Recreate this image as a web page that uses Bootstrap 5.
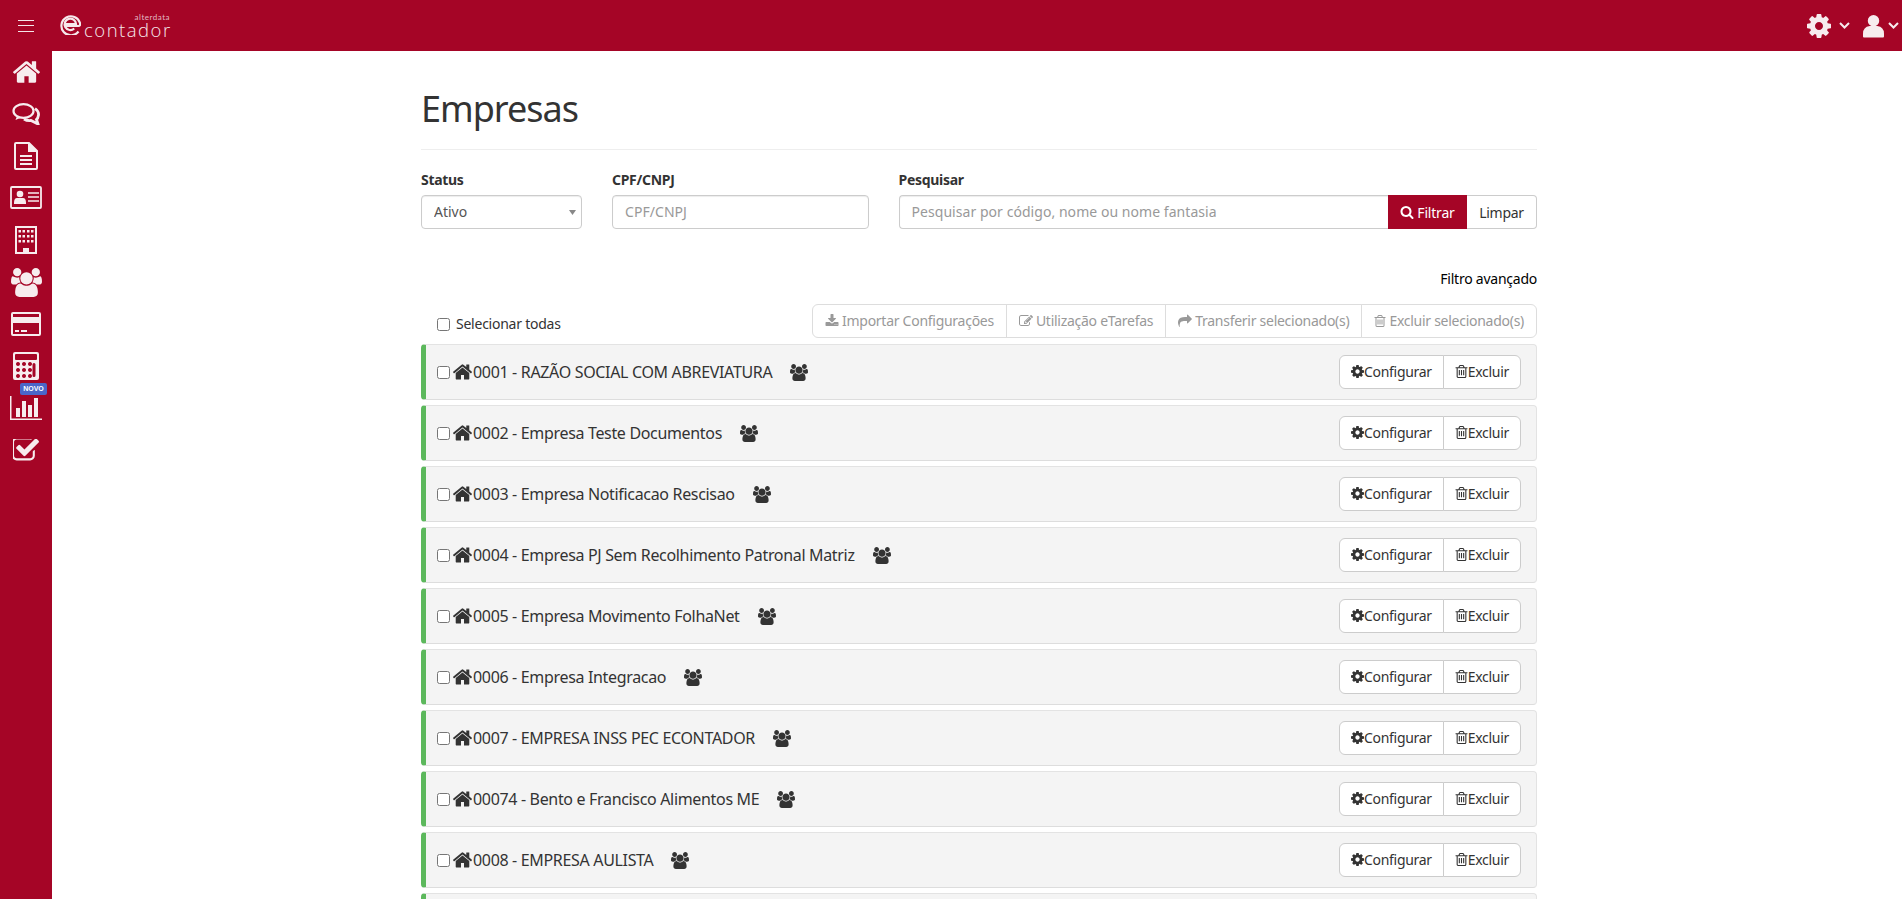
<!DOCTYPE html>
<html lang="pt-BR">
<head>
<meta charset="utf-8">
<title>Empresas</title>
<link href="https://cdn.jsdelivr.net/npm/bootstrap@5.3.0/dist/css/bootstrap.min.css" rel="stylesheet">
<style>
html,body{height:899px;overflow:hidden}
body{font-family:"Noto Sans","Open Sans",sans-serif;font-size:14px;color:#333;background:#fff}
.topo{height:51px;background:#a50526;color:#fff;padding:0 3px 0 18px}
.burger{width:16px;height:12px;border-top:1px solid #f5e6e9;border-bottom:1px solid #f5e6e9;position:relative;background:none;padding:0;border-left:0;border-right:0}
.burger::after{content:"";position:absolute;left:0;right:0;top:4.5px;height:1px;background:#f5e6e9}
.marca{margin-left:26px;width:112px;height:26px;position:relative}
.marca-e{width:21px;height:21px;position:absolute;left:0;top:1px}
.marca-nome{position:absolute;left:24px;top:8px;font:300 18.500px/18px "Open Sans",sans-serif;letter-spacing:1.500px;color:#f6e9ec}
.marca-alter{position:absolute;right:2px;top:0;font:400 8px/8px Lato,sans-serif;letter-spacing:.5px;color:#e3b9c3}
.fundo{height:848px;overflow:hidden}
.lateral{width:52px;background:#a50526;flex:none}
.lat-item{height:42px;position:relative;color:#f7ecee}
.novo-tag{position:absolute;left:20px;top:-4px;width:27px;height:12px;background:#4a66c8;color:#fff;border-radius:2px;font:700 7px/12px "Liberation Sans",sans-serif;text-align:center}
.conteudo{width:1116px;height:848px;overflow:hidden;margin-left:369px;flex:none}
.titulo{font-size:36px;font-weight:400;letter-spacing:-1px;line-height:40px;margin:38px 0 0;padding-bottom:20px;border-bottom:1px solid #eee;color:#333}
.filtros{--bs-gutter-x:30px;margin-top:20px}
.rotulo{font-weight:700;font-size:14px;letter-spacing:-.3px;line-height:20px;margin-bottom:5px;display:block;color:#333}
.campo{height:34px;font-size:14px;padding:5px 12px 7px;border:1px solid #ccc;border-radius:4px;color:#555;box-shadow:inset 0 1px 1px rgba(0,0,0,.075)}
.campo::placeholder{color:#999;letter-spacing:.05px}
.form-select.campo{background-image:url("data:image/svg+xml,%3Csvg xmlns='http://www.w3.org/2000/svg' viewBox='0 0 7 5'%3E%3Cpath d='M0 0h7L3.500 5z' fill='%23888'/%3E%3C/svg%3E");background-size:7px 5px;background-position:right 5px center;padding-right:20px}
.btn-filtrar{background:#a50526;color:#fff;border:1px solid #a50526;border-radius:0;font-size:14px;letter-spacing:-.2px;padding:0 10px;width:79px;height:34px;display:flex;align-items:center;justify-content:center;gap:3px}
.btn-filtrar:hover{background:#a50526;color:#fff}
.btn-limpar{background:#fff;color:#333;border:1px solid #ccc;border-left:0;font-size:14px;letter-spacing:-.3px;width:70px;height:34px;border-radius:0 4px 4px 0;padding:0}
.filtro-av{color:#000;text-align:right;font-size:14px;letter-spacing:-.24px;line-height:20px;margin-top:40px;text-decoration:none;display:block}
.barra{height:34px;margin-top:15px;margin-bottom:6px}
.sel-todas{margin-left:16px;margin-top:6px;font-size:14px;letter-spacing:-.24px;display:flex;align-items:center;gap:6px;color:#333;line-height:20px}
.caixa{width:13px;height:13px;border:1px solid #767676;border-radius:2.5px;margin:0;background:#fff;flex:none;box-shadow:none}
.grupo .btn{height:34px;font-size:14px;letter-spacing:-.27px;border:1px solid #ddd;color:#999;background:#fff;padding:0 12px 1px;display:flex;align-items:center;gap:3px;opacity:1;white-space:nowrap}
.linha{height:56px;margin-bottom:5px;background:#f4f4f4;border:1px solid #e3e3e3;border-bottom-color:#ddd;border-left:5px solid #5cb85c;border-radius:4px;padding:0 15px 0 11px;color:#333}
.linha-nome{font-size:16px;letter-spacing:-.33px;line-height:22px;white-space:nowrap}
.ico{fill:currentColor;flex:none}
.linha .grupo-acao .btn{height:34px;font-size:14px;letter-spacing:-.3px;border:1px solid #ccc;background:#fff;color:#333;padding:0 11px 2px;display:flex;align-items:center;white-space:nowrap}
.ico-casa{margin-left:3px;margin-right:1px}
.ico-socios{margin-left:18px}
</style>
</head>
<body>
<svg width="0" height="0" class="position-absolute">
<defs>
<symbol id="i-home" viewBox="90 250 1612 1300"><path d="M1472 992v480q0 26-19 45t-45 19h-384v-384h-256v384h-384q-26 0-45-19t-19-45v-480q0-1 .5-3t.5-3l575-474 575 474q1 2 1 6zm223-69l-62 74q-8 9-21 11h-3q-13 0-21-7l-692-577-692 577q-12 8-24 7-13-2-21-11l-62-74q-8-10-7-23.500t11-21.500l719-599q32-26 76-26t76 26l244 204v-195q0-14 9-23t23-9h192q14 0 23 9t9 23v408l219 182q10 8 11 21.500t-7 23.500z"/></symbol>
<symbol id="i-users" viewBox="0 0 1920 1792"><path d="M593 896q-162 5-265 128h-134q-82 0-138-40.500t-56-118.500q0-353 124-353 6 0 43.500 21t97.500 42.500 119 21.500q67 0 133-23-5 37-5 66 0 139 81 256zm1071 637q0 120-73 189.500t-194 69.500h-874q-121 0-194-69.500t-73-189.500q0-53 3.500-103.500t14-109 26.500-108.500 43-97.500 62-81 85.500-53.500 111.500-20q10 0 43 21.500t73 48 107 48 135 21.500 135-21.500 107-48 73-48 43-21.500q61 0 111.500 20t85.500 53.500 62 81 43 97.500 26.500 108.500 14 109 3.500 103.500zm-1024-1277q0 106-75 181t-181 75-181-75-75-181 75-181 181-75 181 75 75 181zm704 384q0 159-112.500 271.500t-271.500 112.500-271.500-112.500-112.500-271.500 112.500-271.500 271.500-112.500 271.500 112.500 112.500 271.500zm576 225q0 78-56 118.500t-138 40.500h-134q-103-123-265-128 81-117 81-256 0-29-5-66 66 23 133 23 59 0 119-21.500t97.500-42.500 43.500-21q124 0 124 353zm-128-609q0 106-75 181t-181 75-181-75-75-181 75-181 181-75 181 75 75 181z"/></symbol>
<symbol id="i-cog" viewBox="128 128 1536 1536"><path d="M1152 896q0-106-75-181t-181-75-181 75-75 181 75 181 181 75 181-75 75-181zm512-109v222q0 12-8 23t-20 13l-185 28q-19 54-39 91 35 50 107 138 10 12 10 25t-9 23q-27 37-99 108t-94 71q-12 0-26-9l-138-108q-44 23-91 38-16 136-29 186-7 28-36 28h-222q-14 0-24.500-8.500t-11.500-21.500l-28-184q-49-16-90-37l-141 107q-10 9-25 9-14 0-25-11-126-114-165-168-7-10-7-23 0-12 8-23 15-21 51-66.500t54-70.500q-27-50-41-99l-183-27q-13-2-21-12.500t-8-23.500v-222q0-12 8-23t19-13l186-28q14-46 39-92-40-57-107-138-10-12-10-24 0-10 9-23 26-36 98.500-107.500t94.500-71.500q13 0 26 10l138 107q44-23 91-38 16-136 29-186 7-28 36-28h222q14 0 24.500 8.500t11.500 21.500l28 184q49 16 90 37l142-107q9-9 24-9 13 0 25 10 129 119 165 170 7 8 7 22 0 12-8 23-15 21-51 66.500t-54 70.500q26 50 41 98l183 28q13 2 21 12.500t8 23.500z"/></symbol>
<symbol id="i-search" viewBox="0 0 1792 1792"><path d="M1216 832q0-185-131.500-316.500t-316.500-131.500-316.500 131.500-131.500 316.500 131.500 316.500 316.500 131.500 316.500-131.500 131.500-316.500zm512 832q0 52-38 90t-90 38q-54 0-90-38l-343-342q-179 124-399 124-143 0-273.500-55.500t-225-150-150-225-55.500-273.500 55.500-273.500 150-225 225-150 273.500-55.500 273.500 55.500 225 150 150 225 55.500 273.500q0 220-124 399l343 343q37 37 37 90z"/></symbol>
<symbol id="i-trash" viewBox="128 128 1536 1536"><path d="M704 736v576q0 14-9 23t-23 9h-64q-14 0-23-9t-9-23v-576q0-14 9-23t23-9h64q14 0 23 9t9 23zm256 0v576q0 14-9 23t-23 9h-64q-14 0-23-9t-9-23v-576q0-14 9-23t23-9h64q14 0 23 9t9 23zm256 0v576q0 14-9 23t-23 9h-64q-14 0-23-9t-9-23v-576q0-14 9-23t23-9h64q14 0 23 9t9 23zm128 724v-948h-896v948q0 22 7 40.500t14.500 27 10.500 8.500h832q3 0 10.500-8.500t14.500-27 7-40.500zm-672-1076h448l-48-117q-7-9-17-11h-317q-10 2-17 11zm928 32v64q0 14-9 23t-23 9h-96v948q0 83-47 143.500t-113 60.500h-832q-66 0-113-58.500t-47-141.500v-952h-96q-14 0-23-9t-9-23v-64q0-14 9-23t23-9h309l70-167q15-37 54-63t79-26h320q40 0 79 26t54 63l70 167h309q14 0 23 9t9 23z"/></symbol>
<symbol id="i-share" viewBox="0 0 1792 1792"><path d="M1792 640q0 26-19 45l-512 512q-19 19-45 19t-45-19-19-45v-256h-224q-98 0-175.500 6t-154 21.500-133 42.500-105.500 69.500-80 101-48.500 138.500-17.500 181q0 55 5 123 0 6 2.500 23.500t2.500 26.500q0 15-8.500 25t-23.500 10q-16 0-28-17-7-9-13-22t-13.500-30-10.500-24q-127-285-127-451 0-199 53-333 162-403 875-403h224v-256q0-26 19-45t45-19 45 19l512 512q19 19 19 45z"/></symbol>
<symbol id="i-edit" viewBox="0 0 1792 1792"><path d="M888 1184l116-116-152-152-116 116v56h96v96h56zm440-720q-16-16-33 1l-350 350q-17 17-1 33t33-1l350-350q17-17 1-33zm80 594v190q0 119-84.500 203.500t-203.500 84.500h-832q-119 0-203.500-84.500t-84.500-203.500v-832q0-119 84.500-203.500t203.500-84.500h832q63 0 117 25 15 7 18 23 3 17-9 29l-49 49q-14 14-32 8-23-6-45-6h-832q-66 0-113 47t-47 113v832q0 66 47 113t113 47h832q66 0 113-47t47-113v-126q0-13 9-22l64-64q15-15 35-7t20 29zm-96-738l288 288-672 672h-288v-288zm444 132l-92 92-288-288 92-92q28-28 68-28t68 28l152 152q28 28 28 68t-28 68z"/></symbol>
<symbol id="i-down" viewBox="0 0 1792 1792"><path d="M1344 1344q0-26-19-45t-45-19-45 19-19 45 19 45 45 19 45-19 19-45zm256 0q0-26-19-45t-45-19-45 19-19 45 19 45 45 19 45-19 19-45zm128-224v320q0 40-28 68t-68 28h-1472q-40 0-68-28t-28-68v-320q0-40 28-68t68-28h465l135 136q58 56 136 56t136-56l136-136h464q40 0 68 28t28 68zm-325-569q17 41-14 70l-448 448q-18 19-45 19t-45-19l-448-448q-31-29-14-70 17-39 59-39h256v-448q0-26 19-45t45-19h256q26 0 45 19t19 45v448h256q42 0 59 39z"/></symbol>
<symbol id="i-check" viewBox="128 224 1600 1344"><path d="M1472 930v318q0 119-84.500 203.500t-203.500 84.500h-832q-119 0-203.500-84.500t-84.500-203.500v-832q0-119 84.500-203.500t203.500-84.500h832q63 0 117 25 15 7 18 23 3 16-9 28l-49 49q-10 10-23 10-3 0-9-2-23-6-45-6h-832q-66 0-113 47t-47 113v832q0 66 47 113t113 47h832q66 0 113-47t47-113v-254q0-13 9-22l64-64q10-10 23-10 6 0 12 3 20 8 20 29zm231-489l-814 814q-24 24-57 24t-57-24l-430-430q-24-24-24-57t24-57l110-110q24-24 57-24t57 24l263 263 647-647q24-24 57-24t57 24l110 110q24 24 24 57t-24 57z"/></symbol>
</defs>
</svg>

<header class="topo d-flex align-items-center">
  <button class="burger" type="button" aria-label="Menu"></button>
  <div class="marca">
    <svg class="marca-e" viewBox="0 0 21 21" fill="none" stroke="#f6e9ec" stroke-width="2.200"><path d="M4.500 10h11.500a5.700 5.700 0 1 0-1.800 4.500"/><path d="M18.500 17.500a9.500 9.500 0 1 1 1.500-8.500q.5 3-1.500 3H5"/></svg>
    <span class="marca-nome">contador</span>
    <span class="marca-alter">alterdata</span>
  </div>
  <div class="ms-auto d-flex align-items-center">
    <svg class="ico" width="24" height="24" style="color:#f7ecee"><use href="#i-cog"/></svg>
    <svg class="ms-2" width="11" height="7" viewBox="0 0 11 7" fill="none" stroke="#f7ecee" stroke-width="2"><path d="M1 1l4.500 4.500L10 1"/></svg>
    <svg class="ico" width="21" height="24" viewBox="0 0 22 24" style="color:#f7ecee;margin-left:13px"><circle cx="11" cy="6.500" r="6"/><path d="M1 24q-1 0-1-1v-3q0-7 7-8h8q7 1 7 8v3q0 1-1 1z"/></svg>
    <svg class="ms-1" width="11" height="7" viewBox="0 0 11 7" fill="none" stroke="#f7ecee" stroke-width="2"><path d="M1 1l4.500 4.500L10 1"/></svg>
  </div>
</header>

<div class="fundo d-flex">
  <nav class="lateral">
    <div class="lat-item d-flex align-items-center justify-content-center"><svg class="ico" width="27" height="22"><use href="#i-home"/></svg></div>
    <div class="lat-item d-flex align-items-center justify-content-center"><svg width="28" height="22" viewBox="0 0 28 22" fill="none" stroke="currentColor" stroke-width="2.200"><ellipse cx="11.500" cy="8" rx="10" ry="6.800"/><path d="M5 13l-1.500 4 6-2.500" fill="currentColor" stroke="none"/><path d="M23 5.500q4 3 3.500 6.500t-2 4.500l1.500 4.500-7-3.500q-4 .5-7-1.500" stroke-width="2.800"/></svg></div>
    <div class="lat-item d-flex align-items-center justify-content-center"><svg width="24" height="28" viewBox="0 0 24 28" fill="none" stroke="currentColor" stroke-width="2"><path d="M2 1h13l8 8v17a1 1 0 0 1-1 1H2a1 1 0 0 1-1-1V2a1 1 0 0 1 1-1z"/><path d="M15 1v8h8" fill="currentColor"/><path d="M6 14h12M6 18h12M6 22h12"/></svg></div>
    <div class="lat-item d-flex align-items-center justify-content-center"><svg width="32" height="24" viewBox="0 0 32 24" fill="none" stroke="currentColor" stroke-width="1.800"><rect x="1" y="1" width="30" height="21" rx="1"/><circle cx="10" cy="8" r="3.300" fill="currentColor" stroke="none"/><path d="M4 17q0-5 3-5h6q3 0 3 5v1H4z" fill="currentColor" stroke="none"/><path d="M18 7h11M18 11h11M18 15h11" stroke-width="1.600"/></svg></div>
    <div class="lat-item d-flex align-items-center justify-content-center"><svg width="22" height="28" viewBox="0 0 22 28" fill="currentColor"><path fill-rule="evenodd" d="M0 0h22v28H0zM2 2v24h6v-4h6v4h6V2z"/><path d="M3.500 4h2.500v2.500H3.500zM7.500 4h2.500v2.500H7.500zM12 4h2.500v2.500H12zM16 4h2.500v2.500H16zM3.500 9h2.500v2.500H3.500zM7.500 9h2.500v2.500H7.500zM12 9h2.500v2.500H12zM16 9h2.500v2.500H16zM3.500 14h2.500v2.500H3.500zM7.500 14h2.500v2.500H7.500zM12 14h2.500v2.500H12zM16 14h2.500v2.500H16z"/></svg></div>
    <div class="lat-item d-flex align-items-center justify-content-center"><svg class="ico" width="31" height="29"><use href="#i-users"/></svg></div>
    <div class="lat-item d-flex align-items-center justify-content-center"><svg width="30" height="24" viewBox="0 0 30 24" fill="currentColor"><path fill-rule="evenodd" d="M2 0h26a2 2 0 0 1 2 2v20a2 2 0 0 1-2 2H2a2 2 0 0 1-2-2V2a2 2 0 0 1 2-2zM2 2v3h26V2zM2 11v11h26V11z"/><path d="M4 18h4v2H4zM10 18h6v2h-6z"/></svg></div>
    <div class="lat-item d-flex align-items-center justify-content-center"><svg width="26" height="28" viewBox="0 0 26 28" fill="currentColor"><path fill-rule="evenodd" d="M2 0h22a2 2 0 0 1 2 2v24a2 2 0 0 1-2 2H2a2 2 0 0 1-2-2V2a2 2 0 0 1 2-2zM3 2a1 1 0 0 0-1 1v4a1 1 0 0 0 1 1h20a1 1 0 0 0 1-1V3a1 1 0 0 0-1-1zM5 10a2 2 0 1 0 .01 0zM11 10a2 2 0 1 0 .01 0zM17 10a2 2 0 1 0 .01 0zM5 16a2 2 0 1 0 .01 0zM11 16a2 2 0 1 0 .01 0zM5 22a2 2 0 1 0 .01 0zM11 22a2 2 0 1 0 .01 0zM17 16a2 2 0 1 0 .01 0zM17 22a2 2 0 1 0 .01 0zM21 11a1.500 1.500 0 0 0-1.500 1.500v11a1.500 1.500 0 0 0 3 0v-11A1.500 1.500 0 0 0 21 11z"/></svg></div>
    <div class="lat-item d-flex align-items-center justify-content-center"><span class="novo-tag">NOVO</span><svg width="32" height="24" viewBox="0 0 32 24" fill="currentColor"><path d="M0 0h1.500v22.500H32V24H0zM6 12h4v9H6zM12 5h4v16h-4zM18 9h4v12h-4zM24 2h4v19h-4z"/></svg></div>
    <div class="lat-item d-flex align-items-center justify-content-center"><svg class="ico" width="26" height="22"><use href="#i-check"/></svg></div>
  </nav>

  <main class="conteudo">
    <h1 class="titulo">Empresas</h1>
    <form class="row filtros">
      <div class="col-2">
        <label class="rotulo" for="fStatus">Status</label>
        <select id="fStatus" class="form-select campo"><option>Ativo</option></select>
      </div>
      <div class="col-3">
        <label class="rotulo" for="fCpf">CPF/CNPJ</label>
        <input id="fCpf" class="form-control campo" placeholder="CPF/CNPJ">
      </div>
      <div class="col-7">
        <label class="rotulo" for="fBusca">Pesquisar</label>
        <div class="d-flex">
          <input id="fBusca" class="form-control campo rounded-end-0 border-end-0" placeholder="Pesquisar por código, nome ou nome fantasia">
          <button type="button" class="btn btn-filtrar flex-shrink-0"><svg class="ico" width="14" height="14"><use href="#i-search"/></svg>Filtrar</button>
          <button type="button" class="btn btn-limpar flex-shrink-0">Limpar</button>
        </div>
      </div>
    </form>
    <a class="filtro-av" href="#">Filtro avançado</a>
    <div class="barra d-flex justify-content-between">
      <label class="sel-todas"><input type="checkbox" class="caixa">Selecionar todas</label>
      <div class="btn-group grupo">
        <button type="button" class="btn" disabled><svg class="ico" width="14" height="14"><use href="#i-down"/></svg>Importar Configurações</button>
        <button type="button" class="btn" disabled><svg class="ico" width="14" height="14"><use href="#i-edit"/></svg>Utilização eTarefas</button>
        <button type="button" class="btn" disabled><svg class="ico" width="14" height="14"><use href="#i-share"/></svg>Transferir selecionado(s)</button>
        <button type="button" class="btn" disabled><svg class="ico" width="12" height="12"><use href="#i-trash"/></svg>Excluir selecionado(s)</button>
      </div>
    </div>

    <div class="linha d-flex align-items-center"><input type="checkbox" class="caixa"><svg class="ico ico-casa" width="19" height="16"><use href="#i-home"/></svg><span class="linha-nome">0001 - RAZÃO SOCIAL COM ABREVIATURA</span><svg class="ico ico-socios" width="18" height="17"><use href="#i-users"/></svg><div class="btn-group grupo-acao ms-auto"><button type="button" class="btn"><svg class="ico" width="13" height="13"><use href="#i-cog"/></svg>Configurar</button><button type="button" class="btn"><svg class="ico" width="13" height="13"><use href="#i-trash"/></svg>Excluir</button></div></div>
    <div class="linha d-flex align-items-center"><input type="checkbox" class="caixa"><svg class="ico ico-casa" width="19" height="16"><use href="#i-home"/></svg><span class="linha-nome">0002 - Empresa Teste Documentos</span><svg class="ico ico-socios" width="18" height="17"><use href="#i-users"/></svg><div class="btn-group grupo-acao ms-auto"><button type="button" class="btn"><svg class="ico" width="13" height="13"><use href="#i-cog"/></svg>Configurar</button><button type="button" class="btn"><svg class="ico" width="13" height="13"><use href="#i-trash"/></svg>Excluir</button></div></div>
    <div class="linha d-flex align-items-center"><input type="checkbox" class="caixa"><svg class="ico ico-casa" width="19" height="16"><use href="#i-home"/></svg><span class="linha-nome">0003 - Empresa Notificacao Rescisao</span><svg class="ico ico-socios" width="18" height="17"><use href="#i-users"/></svg><div class="btn-group grupo-acao ms-auto"><button type="button" class="btn"><svg class="ico" width="13" height="13"><use href="#i-cog"/></svg>Configurar</button><button type="button" class="btn"><svg class="ico" width="13" height="13"><use href="#i-trash"/></svg>Excluir</button></div></div>
    <div class="linha d-flex align-items-center"><input type="checkbox" class="caixa"><svg class="ico ico-casa" width="19" height="16"><use href="#i-home"/></svg><span class="linha-nome">0004 - Empresa PJ Sem Recolhimento Patronal Matriz</span><svg class="ico ico-socios" width="18" height="17"><use href="#i-users"/></svg><div class="btn-group grupo-acao ms-auto"><button type="button" class="btn"><svg class="ico" width="13" height="13"><use href="#i-cog"/></svg>Configurar</button><button type="button" class="btn"><svg class="ico" width="13" height="13"><use href="#i-trash"/></svg>Excluir</button></div></div>
    <div class="linha d-flex align-items-center"><input type="checkbox" class="caixa"><svg class="ico ico-casa" width="19" height="16"><use href="#i-home"/></svg><span class="linha-nome">0005 - Empresa Movimento FolhaNet</span><svg class="ico ico-socios" width="18" height="17"><use href="#i-users"/></svg><div class="btn-group grupo-acao ms-auto"><button type="button" class="btn"><svg class="ico" width="13" height="13"><use href="#i-cog"/></svg>Configurar</button><button type="button" class="btn"><svg class="ico" width="13" height="13"><use href="#i-trash"/></svg>Excluir</button></div></div>
    <div class="linha d-flex align-items-center"><input type="checkbox" class="caixa"><svg class="ico ico-casa" width="19" height="16"><use href="#i-home"/></svg><span class="linha-nome">0006 - Empresa Integracao</span><svg class="ico ico-socios" width="18" height="17"><use href="#i-users"/></svg><div class="btn-group grupo-acao ms-auto"><button type="button" class="btn"><svg class="ico" width="13" height="13"><use href="#i-cog"/></svg>Configurar</button><button type="button" class="btn"><svg class="ico" width="13" height="13"><use href="#i-trash"/></svg>Excluir</button></div></div>
    <div class="linha d-flex align-items-center"><input type="checkbox" class="caixa"><svg class="ico ico-casa" width="19" height="16"><use href="#i-home"/></svg><span class="linha-nome">0007 - EMPRESA INSS PEC ECONTADOR</span><svg class="ico ico-socios" width="18" height="17"><use href="#i-users"/></svg><div class="btn-group grupo-acao ms-auto"><button type="button" class="btn"><svg class="ico" width="13" height="13"><use href="#i-cog"/></svg>Configurar</button><button type="button" class="btn"><svg class="ico" width="13" height="13"><use href="#i-trash"/></svg>Excluir</button></div></div>
    <div class="linha d-flex align-items-center"><input type="checkbox" class="caixa"><svg class="ico ico-casa" width="19" height="16"><use href="#i-home"/></svg><span class="linha-nome">00074 - Bento e Francisco Alimentos ME</span><svg class="ico ico-socios" width="18" height="17"><use href="#i-users"/></svg><div class="btn-group grupo-acao ms-auto"><button type="button" class="btn"><svg class="ico" width="13" height="13"><use href="#i-cog"/></svg>Configurar</button><button type="button" class="btn"><svg class="ico" width="13" height="13"><use href="#i-trash"/></svg>Excluir</button></div></div>
    <div class="linha d-flex align-items-center"><input type="checkbox" class="caixa"><svg class="ico ico-casa" width="19" height="16"><use href="#i-home"/></svg><span class="linha-nome">0008 - EMPRESA AULISTA</span><svg class="ico ico-socios" width="18" height="17"><use href="#i-users"/></svg><div class="btn-group grupo-acao ms-auto"><button type="button" class="btn"><svg class="ico" width="13" height="13"><use href="#i-cog"/></svg>Configurar</button><button type="button" class="btn"><svg class="ico" width="13" height="13"><use href="#i-trash"/></svg>Excluir</button></div></div>
    <div class="linha d-flex align-items-center"></div>
  </main>
</div>
<script src="https://cdn.jsdelivr.net/npm/bootstrap@5.3.0/dist/js/bootstrap.bundle.min.js"></script>
</body>
</html>
